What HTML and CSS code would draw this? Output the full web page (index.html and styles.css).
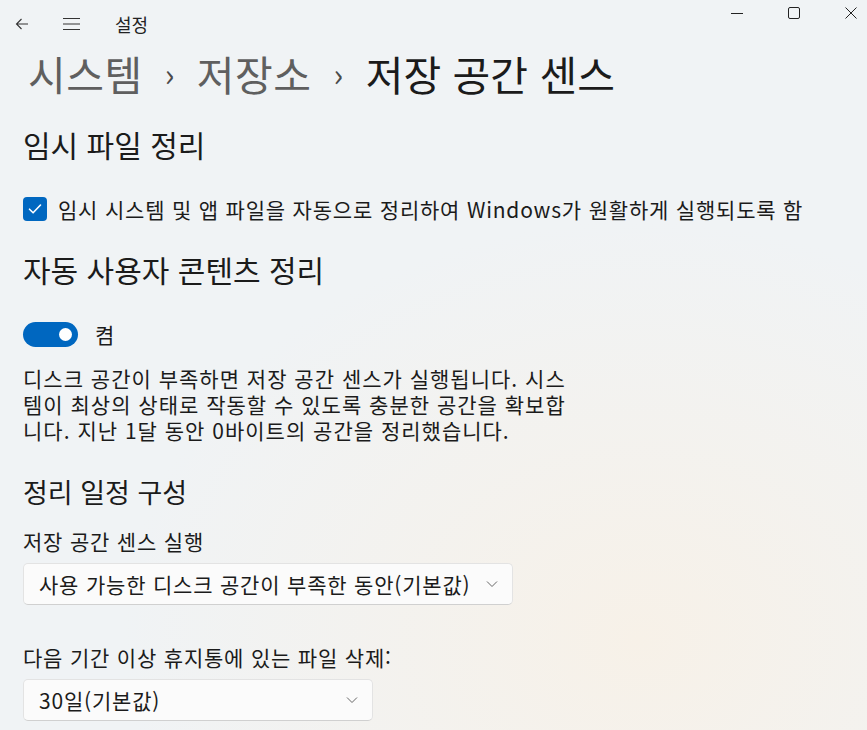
FILE: index.html
```html
<!DOCTYPE html>
<html lang="ko">
<head>
  <meta charset="UTF-8">
  <meta name="viewport" content="width=device-width, initial-scale=1.0">
  <title>설정</title>
  <link rel="stylesheet" href="styles.css">
</head>
<body>
  <header class="titlebar">
    <div class="titlebar-left">
      <svg class="tb-icon" width="16" height="16" viewBox="0 0 16 16"><path d="M14 8H2.5M7.5 3L2.5 8l5 5" fill="none" stroke="#333" stroke-width="1.1"/></svg>
      <svg class="tb-icon menu" width="19" height="14" viewBox="0 0 19 14"><path d="M1 1.5h17M1 7h17M1 12.5h17" stroke="#333" stroke-width="1.1"/></svg>
      <span class="app-name">설정</span>
    </div>
    <div class="window-controls">
      <svg width="12" height="12" viewBox="0 0 12 12"><path d="M0 6.5h12" stroke="#222" stroke-width="1"/></svg>
      <svg width="12" height="12" viewBox="0 0 12 12"><rect x="0.5" y="0.5" width="11" height="11" rx="1.5" fill="none" stroke="#222"/></svg>
      <svg width="12" height="12" viewBox="0 0 12 12"><path d="M0.5 0.5l11 11M11.5 0.5l-11 11" stroke="#222" stroke-width="1"/></svg>
    </div>
  </header>

  <main class="content">
    <h1 class="breadcrumb">
      <span class="crumb">시스템</span>
      <span class="sep">›</span>
      <span class="crumb">저장소</span>
      <span class="sep">›</span>
      <span class="crumb current">저장 공간 센스</span>
    </h1>

    <h2 class="section-title">임시 파일 정리</h2>
    <label class="check-row">
      <span class="checkbox">
        <svg width="14" height="12" viewBox="0 0 14 12"><path d="M1.5 6.2l3.6 3.6L12.5 2" fill="none" stroke="#fff" stroke-width="1.6" stroke-linecap="round" stroke-linejoin="round"/></svg>
      </span>
      임시 시스템 및 앱 파일을 자동으로 정리하여 Windows가 원활하게 실행되도록 함
    </label>

    <h2 class="section-title">자동 사용자 콘텐츠 정리</h2>
    <div class="toggle-row">
      <span class="toggle"><span class="knob"></span></span>
      <span>켬</span>
    </div>
    <p class="desc">디스크 공간이 부족하면 저장 공간 센스가 실행됩니다. 시스템이 최상의 상태로 작동할 수 있도록 충분한 공간을 확보합니다. 지난 1달 동안 0바이트의 공간을 정리했습니다.</p>

    <h3 class="sub-title">정리 일정 구성</h3>
    <div class="field">
      <div class="field-label">저장 공간 센스 실행</div>
      <div class="select wide">
        <span>사용 가능한 디스크 공간이 부족한 동안(기본값)</span>
        <svg width="12" height="8" viewBox="0 0 12 8"><path d="M1 1.5l5 5 5-5" fill="none" stroke="#666" stroke-width="1"/></svg>
      </div>
    </div>
    <div class="field">
      <div class="field-label">다음 기간 이상 휴지통에 있는 파일 삭제:</div>
      <div class="select narrow">
        <span>30일(기본값)</span>
        <svg width="12" height="8" viewBox="0 0 12 8"><path d="M1 1.5l5 5 5-5" fill="none" stroke="#666" stroke-width="1"/></svg>
      </div>
    </div>
  </main>
</body>
</html>
```

FILE: styles.css
```css
html, body { height: 100%; }
body {
  margin: 0;
  font-family: "Noto Sans CJK KR", "Noto Sans", sans-serif;
  color: #1b1b1b;
  background:
    radial-gradient(ellipse 520px 420px at 640px 640px, #f7f1e8 0%, rgba(247,241,232,0) 100%),
    #f0f3f5;
  overflow: hidden;
}

.titlebar { display: flex; justify-content: space-between; align-items: flex-start; height: 44px; }
.titlebar-left { display: flex; align-items: center; height: 48px; padding-left: 14px; }
.tb-icon { margin-right: 32px; }
.tb-icon.menu { margin-right: 34px; }
.app-name { font-size: 18px; color: #222; }
.window-controls { display: flex; gap: 45px; padding: 7px 10px 0 0; }

.content { padding: 0 23px; }

.breadcrumb { display: flex; align-items: center; gap: 22px; margin: 0 0 22px 5px; font-size: 41px; font-weight: normal; line-height: 58px; letter-spacing: 0.5px; }
.crumb { color: #5f5f5f; }
.crumb.current { color: #1b1b1b; letter-spacing: 0; }
.sep { font-size: 32px; color: #4a4a4a; }

.section-title { font-size: 30px; font-weight: normal; margin: 0 0 31px; line-height: 40px; }

.check-row { display: flex; align-items: center; gap: 11px; font-size: 21px; line-height: 28px; letter-spacing: 0.8px; margin-bottom: 26px; }
.checkbox { width: 24px; height: 24px; border-radius: 4px; background: #0067c0; display: flex; align-items: center; justify-content: center; flex: none; }

.toggle-row { display: flex; align-items: center; gap: 17px; font-size: 21px; line-height: 28px; margin-bottom: 17px; }
.toggle { width: 55px; height: 25px; border-radius: 13px; background: #0067c0; position: relative; }
.knob { position: absolute; right: 6px; top: 6px; width: 13px; height: 13px; border-radius: 50%; background: #fff; }

.desc { width: 555px; font-size: 21px; line-height: 26px; letter-spacing: 1px; margin: 0 0 31px; }

.sub-title { font-size: 27px; font-weight: normal; margin: 0 0 17px; line-height: 36px; }

.field { margin-bottom: 38px; }
.field-label { font-size: 21px; line-height: 28px; letter-spacing: 0.8px; margin-bottom: 8px; }
.select {
  display: flex; align-items: center; justify-content: space-between;
  height: 42px; box-sizing: border-box; padding: 0 14px 0 15px;
  background: #fbfbfb; border: 1px solid #e3e3e3; border-bottom-color: #d0d0d0; border-radius: 5px;
  font-size: 21px; letter-spacing: 0.8px;
}
.select.wide { width: 490px; }
.select.narrow { width: 350px; }
```
